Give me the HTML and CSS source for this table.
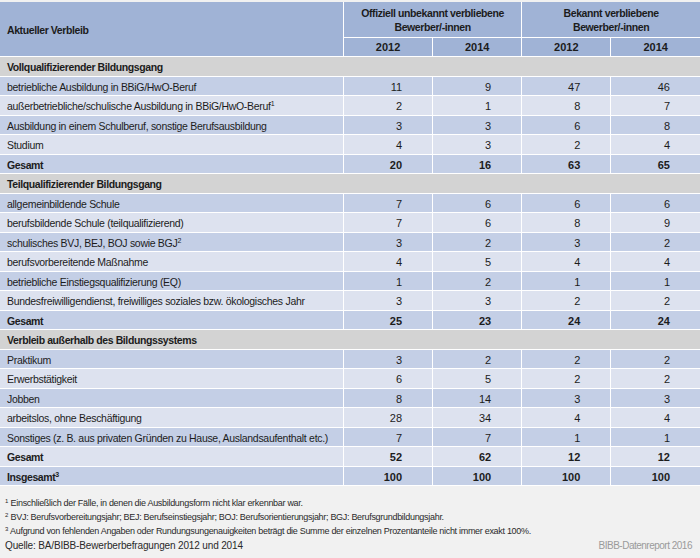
FILE: index.html
```html
<!DOCTYPE html>
<html lang="de">
<head>
<meta charset="utf-8">
<link rel="stylesheet" href="styles.css">
</head>
<body>
<div class="page">
<table class="data">
  <colgroup>
    <col class="c-label"><col class="c-num"><col class="c-num"><col class="c-num"><col class="c-num">
  </colgroup>
  <thead>
    <tr class="h1">
      <th rowspan="2" class="lab">Aktueller Verbleib</th>
      <th colspan="2">Offiziell unbekannt verbliebene<br>Bewerber/-innen</th>
      <th colspan="2">Bekannt verbliebene<br>Bewerber/-innen</th>
    </tr>
    <tr class="h2">
      <th>2012</th><th>2014</th><th>2012</th><th>2014</th>
    </tr>
  </thead>
  <tbody>
    <tr class="sec"><td colspan="5">Vollqualifizierender Bildungsgang</td></tr>
    <tr class="d"><td>betriebliche Ausbildung in BBiG/HwO-Beruf</td><td>11</td><td>9</td><td>47</td><td>46</td></tr>
    <tr class="l"><td>außerbetriebliche/schulische Ausbildung in BBiG/HwO-Beruf<sup>1</sup></td><td>2</td><td>1</td><td>8</td><td>7</td></tr>
    <tr class="d"><td>Ausbildung in einem Schulberuf, sonstige Berufsausbildung</td><td>3</td><td>3</td><td>6</td><td>8</td></tr>
    <tr class="l"><td>Studium</td><td>4</td><td>3</td><td>2</td><td>4</td></tr>
    <tr class="d tot"><td>Gesamt</td><td>20</td><td>16</td><td>63</td><td>65</td></tr>
    <tr class="sec"><td colspan="5">Teilqualifizierender Bildungsgang</td></tr>
    <tr class="d"><td>allgemeinbildende Schule</td><td>7</td><td>6</td><td>6</td><td>6</td></tr>
    <tr class="l"><td>berufsbildende Schule (teilqualifizierend)</td><td>7</td><td>6</td><td>8</td><td>9</td></tr>
    <tr class="d"><td>schulisches BVJ, BEJ, BOJ sowie BGJ<sup>2</sup></td><td>3</td><td>2</td><td>3</td><td>2</td></tr>
    <tr class="l"><td>berufsvorbereitende Maßnahme</td><td>4</td><td>5</td><td>4</td><td>4</td></tr>
    <tr class="d"><td>betriebliche Einstiegsqualifizierung (EQ)</td><td>1</td><td>2</td><td>1</td><td>1</td></tr>
    <tr class="l"><td>Bundesfreiwilligendienst, freiwilliges soziales bzw. ökologisches Jahr</td><td>3</td><td>3</td><td>2</td><td>2</td></tr>
    <tr class="d tot"><td>Gesamt</td><td>25</td><td>23</td><td>24</td><td>24</td></tr>
    <tr class="sec"><td colspan="5">Verbleib außerhalb des Bildungssystems</td></tr>
    <tr class="d"><td>Praktikum</td><td>3</td><td>2</td><td>2</td><td>2</td></tr>
    <tr class="l"><td>Erwerbstätigkeit</td><td>6</td><td>5</td><td>2</td><td>2</td></tr>
    <tr class="d"><td>Jobben</td><td>8</td><td>14</td><td>3</td><td>3</td></tr>
    <tr class="l"><td>arbeitslos, ohne Beschäftigung</td><td>28</td><td>34</td><td>4</td><td>4</td></tr>
    <tr class="d"><td>Sonstiges (z. B. aus privaten Gründen zu Hause, Auslandsaufenthalt etc.)</td><td>7</td><td>7</td><td>1</td><td>1</td></tr>
    <tr class="l tot"><td>Gesamt</td><td>52</td><td>62</td><td>12</td><td>12</td></tr>
    <tr class="d tot"><td>Insgesamt<sup>3</sup></td><td>100</td><td>100</td><td>100</td><td>100</td></tr>
  </tbody>
</table>
<div class="notes">
  <p><sup>1</sup> Einschließlich der Fälle, in denen die Ausbildungsform nicht klar erkennbar war.</p>
  <p><sup>2</sup> BVJ: Berufsvorbereitungsjahr; BEJ: Berufseinstiegsjahr; BOJ: Berufsorientierungsjahr; BGJ: Berufsgrundbildungsjahr.</p>
  <p><sup>3</sup> Aufgrund von fehlenden Angaben oder Rundungsungenauigkeiten beträgt die Summe der einzelnen Prozentanteile nicht immer exakt 100%.</p>
</div>
<div class="foot">
  <span class="src">Quelle: BA/BIBB-Bewerberbefragungen 2012 und 2014</span>
  <span class="brand">BIBB-Datenreport 2016</span>
</div>
</div>
</body>
</html>
```
FILE: styles.css
```css
html, body {
  margin: 0;
  padding: 0;
  background: #f1f1f1;
}
body {
  font-family: "Liberation Sans", Arial, sans-serif;
  color: #1c1c1c;
  font-size: 10.5px;
}
.page {
  width: 700px;
  padding-top: 2px;
}
.data {
  width: 700px;
  border-collapse: collapse;
  table-layout: fixed;
}
.c-label { width: 343px; }
.c-num { width: 89px; }
.data th, .data td {
  padding: 0;
  border: 1px solid #ffffff;
  border-top: 0;
  line-height: 12px;
  white-space: nowrap;
}
.data tr > :first-child { border-left: 0; }
.data tr > :last-child { border-right: 0; }
.data th {
  background: #a0b3d6;
  font-weight: bold;
  text-align: center;
  font-size: 10.5px;
  line-height: 14px;
  letter-spacing: -0.4px;
}
.h1 th { height: 35px; }
.h2 th {
  height: 18px;
  font-size: 11px;
  letter-spacing: 0;
}
.data th.lab {
  text-align: left;
  padding-left: 7px;
  padding-top: 2px;
  height: 33px;
}
.data td {
  height: 16.5px;
  padding-top: 2px;
  text-align: right;
  padding-right: 30px;
  font-size: 11px;
}
.data td:first-child {
  text-align: left;
  padding-left: 7px;
  padding-right: 0;
  font-size: 10.5px;
  letter-spacing: -0.3px;
}
.sec td {
  background: #d3d3d3;
  font-weight: bold;
}
.data .sec td {
  letter-spacing: -0.4px;
}
.d td { background: #c4cfe6; }
.l td { background: #dde2ef; }
.tot td { font-weight: bold; }
.data .tot td:first-child { letter-spacing: -0.4px; }
sup {
  font-size: 7px;
  line-height: 0;
  vertical-align: 4px;
  letter-spacing: 0;
}
.notes {
  padding: 10px 0 0 5px;
  font-size: 9px;
  letter-spacing: -0.3px;
  color: #2a2a2a;
}
.notes p {
  margin: 0;
  line-height: 14px;
}
.notes sup { font-size: 6px; vertical-align: 3px; }
.foot {
  display: flex;
  justify-content: space-between;
  padding: 1px 8px 0 5px;
  font-size: 10px;
  line-height: 14px;
}
.src { color: #2a2a2a; letter-spacing: -0.15px; }
.brand { color: #9a9a9a; letter-spacing: -0.5px; }
```
